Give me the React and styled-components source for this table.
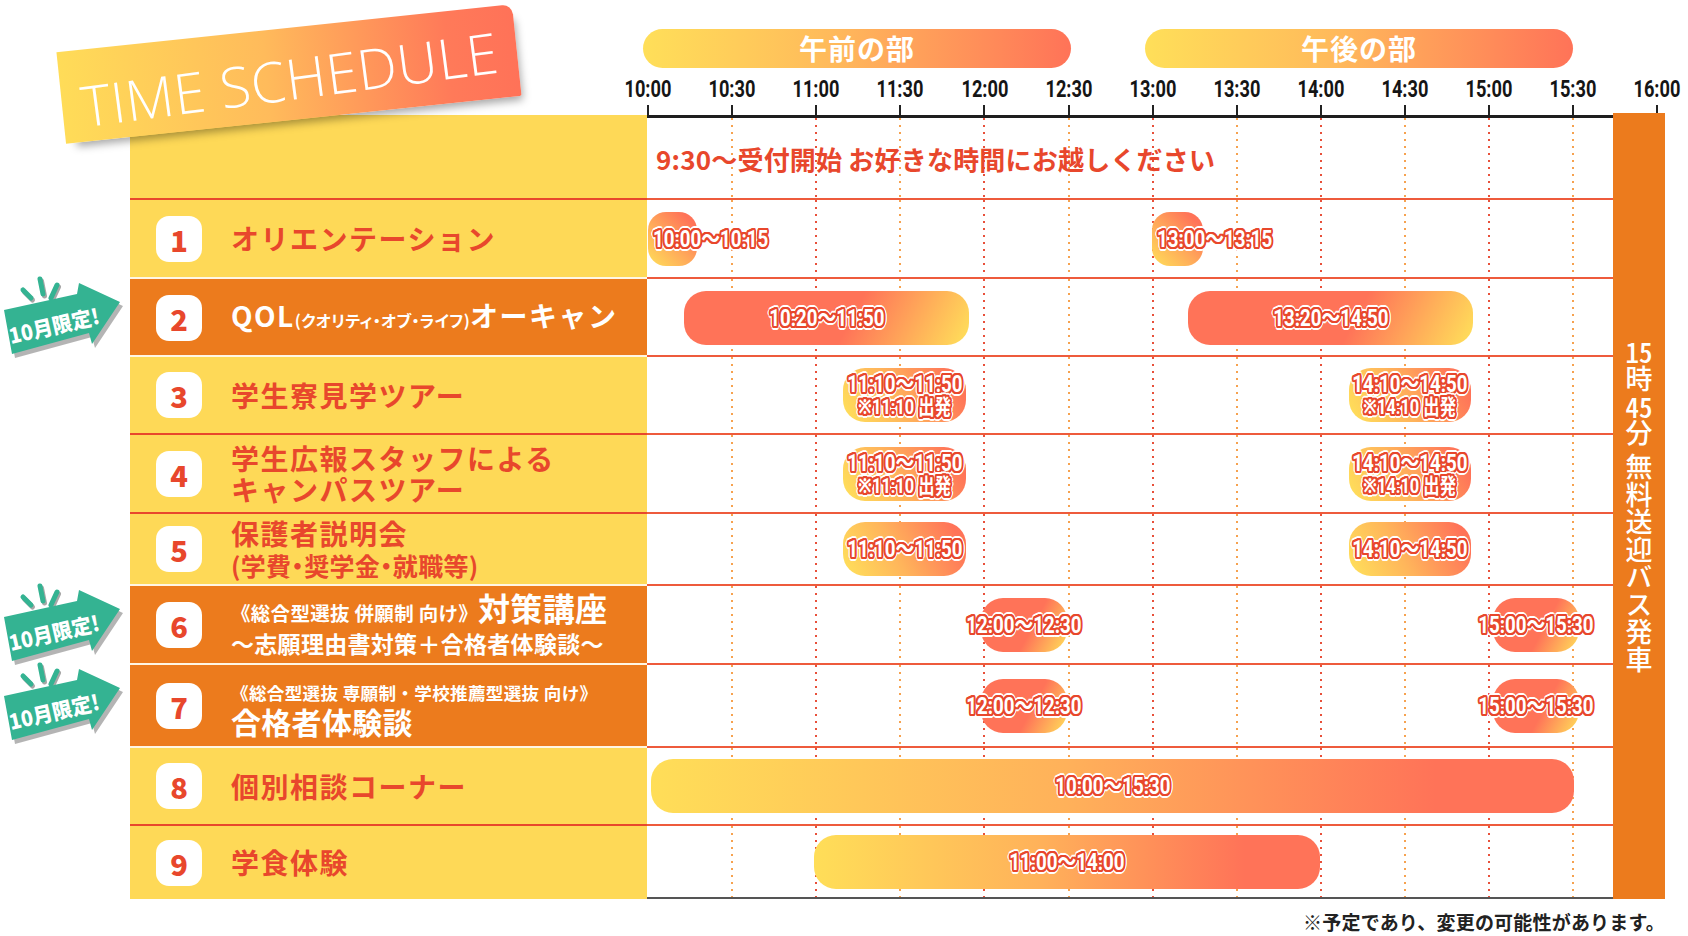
import styled, { createGlobalStyle } from "styled-components"

const RED = "#e8472c"
const YELLOW = "#fed957"
const ORANGE = "#ec7b1d"
const CORAL = "#ff7358"
const SUN = "#ffdf59"
const TEAL = "#34b392"

const JP = `"Noto Sans CJK JP", "Noto Sans", sans-serif`
const NUM = `Roboto, "Noto Sans", "Noto Sans CJK JP", sans-serif`

const SLOT = 84.1 // px per 30 minutes on the time axis
const TIMES = ["10:00", "10:30", "11:00", "11:30", "12:00", "12:30", "13:00", "13:30", "14:00", "14:30", "15:00", "15:30", "16:00"]

const ring = (r, c) => {
	const out = []
	for (let i = 0; i < 16; i++) {
		const a = (i * Math.PI) / 8
		out.push(`${(Math.cos(a) * r).toFixed(2)}px ${(Math.sin(a) * r).toFixed(2)}px 0 ${c}`)
	}
	return out.join(", ")
}
const OUTLINE = `${ring(1.1, RED)}, ${ring(2.3, RED)}, ${ring(3.8, "#fff")}`

// built at render time so the styled parts below are defined
const buildRows = () => [
	{
		n: 1, h: 79, tone: "yellow", line: "red",
		label: <Title $tone="yellow">オリエンテーション</Title>,
		bars: [
			{ x: 1, w: 49, v: "dot", t: "10:00〜10:15" },
			{ x: 505, w: 51, v: "dot", t: "13:00〜13:15" },
		],
	},
	{
		n: 2, h: 78, tone: "orange", line: "white", badge: true,
		label: <Title $tone="orange">QOL<Small $size={16} $palt>(クオリティ・オブ・ライフ)</Small>オーキャン</Title>,
		bars: [
			{ x: 37, w: 285, v: "hot", t: "10:20〜11:50" },
			{ x: 541, w: 285, v: "hot", t: "13:20〜14:50" },
		],
	},
	{
		n: 3, h: 78, tone: "yellow", line: "white",
		label: <Title $tone="yellow">学生寮見学ツアー</Title>,
		bars: [
			{ x: 196, w: 123, v: "warm", t: "11:10〜11:50", sub: "※11:10 出発" },
			{ x: 702, w: 122, v: "warm", t: "14:10〜14:50", sub: "※14:10 出発" },
		],
	},
	{
		n: 4, h: 79, tone: "yellow", line: "red",
		label: <Title $tone="yellow">学生広報スタッフによる<br />キャンパスツアー</Title>,
		bars: [
			{ x: 196, w: 123, v: "warm", t: "11:10〜11:50", sub: "※11:10 出発" },
			{ x: 702, w: 122, v: "warm", t: "14:10〜14:50", sub: "※14:10 出発" },
		],
	},
	{
		n: 5, h: 72, tone: "yellow", line: "red",
		label: <Title $tone="yellow">保護者説明会<br /><Small $size={25} $palt>(学費・奨学金・就職等)</Small></Title>,
		bars: [
			{ x: 196, w: 123, v: "warm", t: "11:10〜11:50" },
			{ x: 702, w: 122, v: "warm", t: "14:10〜14:50" },
		],
	},
	{
		n: 6, h: 79, tone: "orange", line: "white", badge: true,
		label: (
			<Title $tone="orange" $lh={29}>
				<Small $size={19.5}>《総合型選抜 併願制 向け》</Small><Small $size={32}>対策講座</Small><br />
				<Small $size={23}>〜志願理由書対策＋合格者体験談〜</Small>
			</Title>
		),
		bars: [
			{ x: 334, w: 86, v: "hot", t: "12:00〜12:30" },
			{ x: 846, w: 86, v: "hot", t: "15:00〜15:30" },
		],
	},
	{
		n: 7, h: 83, tone: "orange", line: "white", badge: true,
		label: (
			<Title $tone="orange" $lh={29}>
				<Small $size={17.6}>《総合型選抜 専願制・学校推薦型選抜 向け》</Small><br />
				<Small $size={30}>合格者体験談</Small>
			</Title>
		),
		bars: [
			{ x: 334, w: 86, v: "hot", t: "12:00〜12:30" },
			{ x: 846, w: 86, v: "hot", t: "15:00〜15:30" },
		],
	},
	{
		n: 8, h: 78, tone: "yellow", line: "white",
		label: <Title $tone="yellow">個別相談コーナー</Title>,
		bars: [{ x: 4, w: 923, v: "long", t: "10:00〜15:30" }],
	},
	{
		n: 9, h: 75, tone: "yellow", line: "red", last: true,
		label: <Title $tone="yellow">学食体験</Title>,
		bars: [{ x: 167, w: 506, v: "long", t: "11:00〜14:00" }],
	},
]

function Badge() {
	const arrow = "4,33 77,17 79,6 120,25 92,67 89,56 12,77"
	const bursts = [
		[23, 13, 31, 21],
		[40, 2, 43, 17],
		[57, 8, 51, 21],
	]
	return (
		<BadgeSvg viewBox="0 0 125 80" width="125" height="80">
			{bursts.map(([x1, y1, x2, y2], i) => (
				<line key={`s${i}`} x1={x1 + 1.5} y1={y1 + 2} x2={x2 + 1.5} y2={y2 + 2} stroke="#a7a7a7" strokeWidth="5" strokeLinecap="round" />
			))}
			{bursts.map(([x1, y1, x2, y2], i) => (
				<line key={`b${i}`} x1={x1} y1={y1} x2={x2} y2={y2} stroke={TEAL} strokeWidth="5" strokeLinecap="round" />
			))}
			<polygon points={arrow} fill="#9b9b9b" transform="translate(3 4)" opacity="0.75" />
			<polygon points={arrow} fill={TEAL} />
			<text
				transform="translate(11 67) rotate(-13)"
				fill="#fff"
				fontFamily={JP}
				fontWeight="900"
				fontSize="21"
				textLength="92"
				lengthAdjust="spacingAndGlyphs"
			>
				10月限定!
			</text>
		</BadgeSvg>
	)
}

function Bar({ bar }) {
	const start = bar.v === "dot"
	return (
		<BarBox $x={bar.x} $w={bar.w} $v={bar.v}>
			<BarLabel $start={start}>
				<BarText $size={24} $start={start}>{bar.t}</BarText>
				{bar.sub && <BarText $size={21}>{bar.sub}</BarText>}
			</BarLabel>
		</BarBox>
	)
}

function GridLines() {
	return TIMES.slice(1, 12).map((t, i) => (
		<GridLine key={t} $x={1 + (i + 1) * SLOT} $hour={i % 2 === 1} />
	))
}

export default function App() {
	const rows = buildRows()
	return (
		<Page>
			<GlobalStyle />
			<Top>
				<StickyArea>
					<Sticky>
						<StickyText>TIME SCHEDULE</StickyText>
					</Sticky>
				</StickyArea>
				<TimeHead>
					<Pills>
						<Pill>午前の部</Pill>
						<Pill>午後の部</Pill>
					</Pills>
					<Scale>
						{TIMES.map((t) => (
							<Tick key={t}>
								<TickLabel>{t}</TickLabel>
							</Tick>
						))}
					</Scale>
				</TimeHead>
			</Top>

			<Body>
				<Table>
					<Row $h={83}>
						<BadgeCell />
						<LabelCell $tone="yellow" $line="none" />
						<TimeCell $axis>
							<GridLines />
							<Reception>9:30〜受付開始 お好きな時間にお越しください</Reception>
						</TimeCell>
					</Row>
					{rows.map((row) => (
						<Row key={row.n} $h={row.h}>
							<BadgeCell>{row.badge && <Badge />}</BadgeCell>
							<LabelCell $tone={row.tone} $line={row.line}>
								<NumBox>{row.n}</NumBox>
								{row.label}
							</LabelCell>
							<TimeCell $last={row.last}>
								<GridLines />
								{row.bars.map((bar) => (
									<Bar key={bar.x} bar={bar} />
								))}
							</TimeCell>
						</Row>
					))}
				</Table>
				<BusColumn>
					<BusText>
						<Tcy>15</Tcy>時<Tcy>45</Tcy>分 無料送迎バス発車
					</BusText>
				</BusColumn>
			</Body>

			<Note>※予定であり、変更の可能性があります。</Note>
		</Page>
	)
}

const GlobalStyle = createGlobalStyle`
	html, body {
		margin: 0;
		padding: 0;
		background: #fff;
		overflow: hidden;
	}
	*, *::before, *::after {
		box-sizing: border-box;
	}
`

const Page = styled.div`
	width: 1688px;
	height: 936px;
	overflow: hidden;
	font-family: ${JP};
	background: #fff;
`

const Top = styled.div`
	display: flex;
	height: 115px;
`

	const StickyArea = styled.div`
		width: 647px;
		flex-shrink: 0;
		position: relative;
		z-index: 3;
	`

		const Sticky = styled.div`
			width: 458px;
			height: 92px;
			margin: 28px 0 0 60px;
			transform: rotate(-6deg);
			background: linear-gradient(90deg, #ffdc58 0%, #ffbb5b 45%, #ff7a59 85%, #ff7258 100%);
			box-shadow: 6px 9px 9px -5px rgba(0, 0, 0, 0.35);
			border-radius: 0 10px 2px 0;
			display: flex;
			align-items: center;
			justify-content: center;
		`

		const StickyText = styled.span`
			display: inline-block;
			color: #fff;
			font-family: "Open Sans", "DejaVu Sans", sans-serif;
			font-weight: 300;
			font-size: 56px;
			letter-spacing: 0.5px;
			line-height: 1;
			transform: rotate(-1.5deg) translateY(4px);
		`

	const TimeHead = styled.div`
		flex: 1;
		display: flex;
		flex-direction: column;
	`

		const Pills = styled.div`
			display: flex;
			gap: 74px;
			margin: 29px 0 0 -4px;
		`

		const Pill = styled.div`
			width: 428px;
			height: 39px;
			border-radius: 20px;
			background: linear-gradient(90deg, ${SUN} 0%, #ffb95b 45%, ${CORAL} 100%);
			color: #fff;
			font-weight: 700;
			font-size: 28px;
			line-height: 39px;
			text-align: center;
			letter-spacing: 1px;
		`

		const Scale = styled.div`
			display: flex;
			margin: auto 0 0 -41px;
		`

		const Tick = styled.div`
			width: ${SLOT}px;
			flex-shrink: 0;
			display: flex;
			flex-direction: column;
			align-items: center;

			&::after {
				content: "";
				width: 2px;
				height: 10px;
				margin-top: 4px;
				background: #222;
			}
		`

		const TickLabel = styled.span`
			display: inline-block;
			font-family: ${NUM};
			font-weight: 700;
			font-size: 24px;
			line-height: 24px;
			color: #151515;
			transform: scaleX(0.76);
		`

const Body = styled.div`
	display: flex;
	align-items: stretch;
`

	const Table = styled.div`
		width: 1613px;
		display: flex;
		flex-direction: column;
	`

		const Row = styled.div`
			display: grid;
			grid-template-columns: 130px 517px 966px;
			height: ${(p) => p.$h}px;
		`

		const BadgeCell = styled.div`
			display: flex;
			align-items: flex-start;
		`

			const BadgeSvg = styled.svg`
				display: block;
				overflow: visible;
			`

		const LabelCell = styled.div`
			display: flex;
			align-items: center;
			gap: 29px;
			padding-left: 26px;
			background: ${(p) => (p.$tone === "orange" ? ORANGE : YELLOW)};
			border-top: ${(p) => (p.$line === "none" ? "0" : `2px solid ${p.$line === "red" ? RED : "#fff6e4"}`)};
		`

			const NumBox = styled.div`
				width: 46px;
				height: 46px;
				flex-shrink: 0;
				border-radius: 13px;
				background: #fff;
				color: ${RED};
				font-weight: 900;
				font-size: 29px;
				line-height: 46px;
				text-align: center;
			`

			const Title = styled.div`
				color: ${(p) => (p.$tone === "orange" ? "#fff" : RED)};
				font-weight: 700;
				font-size: 28px;
				line-height: ${(p) => p.$lh || 31}px;
				letter-spacing: 1.5px;
				white-space: nowrap;
			`

				const Small = styled.span`
					font-size: ${(p) => p.$size}px;
					letter-spacing: 0.3px;
					font-feature-settings: ${(p) => (p.$palt ? '"palt"' : "normal")};
				`

		const TimeCell = styled.div`
			position: relative;
			display: flex;
			align-items: center;
			border-top: ${(p) => (p.$axis ? "3px solid #1e1e1e" : `2px solid #ee5b3c`)};
			border-bottom: ${(p) => (p.$last ? "2px solid #555" : "0")};
		`

			const GridLine = styled.div`
				position: absolute;
				top: 0;
				bottom: 0;
				left: ${(p) => p.$x - 1}px;
				width: 2px;
				background: repeating-linear-gradient(
					to bottom,
					${(p) => (p.$hour ? "#e8503a" : "#f6a24f")} 0 2px,
					transparent 2px 7px
				);
			`

			const Reception = styled.div`
				position: relative;
				margin-left: 9px;
				color: ${RED};
				font-weight: 700;
				font-size: 26px;
				letter-spacing: 0.2px;
				white-space: nowrap;
			`

			const BarBox = styled.div`
				position: absolute;
				left: ${(p) => p.$x}px;
				width: ${(p) => p.$w}px;
				top: 50%;
				height: 54px;
				margin-top: -27px;
				border-radius: ${(p) => (p.$v === "dot" ? 18 : 22)}px;
				display: flex;
				align-items: center;
				justify-content: ${(p) => (p.$v === "dot" ? "flex-start" : "center")};
				padding-left: ${(p) => (p.$v === "dot" ? 5 : 0)}px;
				background: ${(p) =>
					({
						dot: `linear-gradient(45deg, ${SUN} 0%, #ffa95a 45%, ${CORAL} 85%)`,
						hot: `linear-gradient(118deg, ${CORAL} 0%, ${CORAL} 58%, #ffe25a 100%)`,
						warm: `linear-gradient(62deg, #ffe25a 0%, #ffb55b 42%, ${CORAL} 90%)`,
						long: `linear-gradient(90deg, #ffde58 0%, #ffb15a 45%, ${CORAL} 85%, ${CORAL} 100%)`,
					})[p.$v]};
			`

				const BarLabel = styled.div`
					display: flex;
					flex-direction: column;
					align-items: ${(p) => (p.$start ? "flex-start" : "center")};
					gap: 1px;
					white-space: nowrap;
				`

					const BarText = styled.span`
						display: inline-block;
						font-family: ${NUM};
						font-weight: 700;
						font-size: ${(p) => p.$size}px;
						line-height: 1;
						color: #fff;
						text-shadow: ${OUTLINE};
						transform: scaleX(0.78);
						transform-origin: ${(p) => (p.$start ? "left center" : "center")};
					`

	const BusColumn = styled.div`
		width: 52px;
		margin-top: -2px;
		background: ${ORANGE};
		display: flex;
		align-items: center;
		justify-content: center;
	`

		const BusText = styled.div`
			writing-mode: vertical-rl;
			color: #fff;
			font-weight: 500;
			font-size: 27px;
			letter-spacing: 0.5px;
			line-height: 1;
		`

			const Tcy = styled.span`
				text-combine-upright: all;
			`

const Note = styled.div`
	width: 1665px;
	margin-top: 13px;
	text-align: right;
	font-weight: 700;
	font-size: 19px;
	line-height: 20px;
	letter-spacing: 0.2px;
	color: #222;
`
